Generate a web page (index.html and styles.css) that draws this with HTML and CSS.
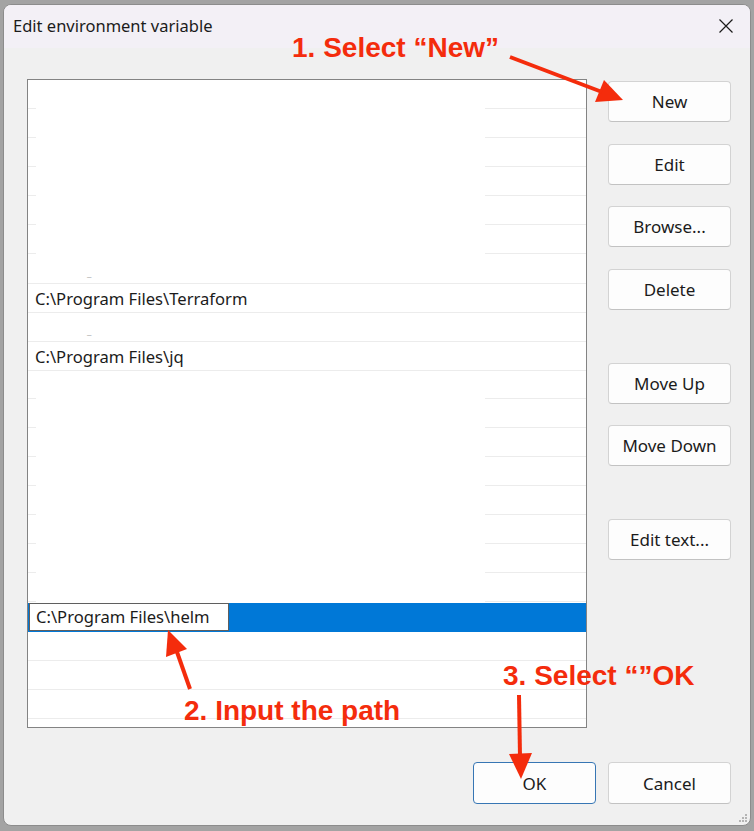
FILE: index.html
```html
<!DOCTYPE html>
<html lang="en">
  <head>
    <meta charset="UTF-8" />
    <title>Edit environment variable</title>
    <link rel="stylesheet" href="styles.css">
  </head>
  <body>
    <div class="dialog">
      <div class="titlebar">
        <span class="title">Edit environment variable</span>
        <svg class="close" width="16" height="16" viewBox="0 0 16 16">
          <path d="M1.5 1.5 L14.5 14.5 M14.5 1.5 L1.5 14.5" stroke="#1b1b1b" stroke-width="1.2" fill="none" />
        </svg>
      </div>

      <div class="content">
        <div class="list">
          <div class="row masked"></div>
          <div class="row masked"></div>
          <div class="row masked"></div>
          <div class="row masked"></div>
          <div class="row masked"></div>
          <div class="row masked"></div>
          <div class="row"><span class="tick">_</span></div>
          <div class="row">C:\Program Files\Terraform</div>
          <div class="row"><span class="tick">_</span></div>
          <div class="row">C:\Program Files\jq</div>
          <div class="row masked"></div>
          <div class="row masked"></div>
          <div class="row masked"></div>
          <div class="row masked"></div>
          <div class="row masked"></div>
          <div class="row masked"></div>
          <div class="row masked"></div>
          <div class="row masked"></div>
          <div class="row selected">
            <span class="edit-box">C:\Program Files\helm</span>
          </div>
          <div class="row"></div>
          <div class="row"></div>
          <div class="row"></div>
        </div>

        <div class="side-buttons">
          <button>New</button>
          <button>Edit</button>
          <button>Browse...</button>
          <button>Delete</button>
          <button class="group">Move Up</button>
          <button>Move Down</button>
          <button class="group">Edit text...</button>
        </div>
      </div>

      <div class="footer">
        <button class="default">OK</button>
        <button>Cancel</button>
      </div>

      <svg class="grip" width="10" height="10" viewBox="0 0 10 10">
        <rect x="7" y="1" width="2" height="2" fill="#b4b4b4" />
        <rect x="4" y="4" width="2" height="2" fill="#b4b4b4" />
        <rect x="7" y="4" width="2" height="2" fill="#b4b4b4" />
        <rect x="1" y="7" width="2" height="2" fill="#b4b4b4" />
        <rect x="4" y="7" width="2" height="2" fill="#b4b4b4" />
        <rect x="7" y="7" width="2" height="2" fill="#b4b4b4" />
      </svg>
    </div>

    <!-- red callouts drawn over the screenshot -->
    <svg class="notes" width="754" height="831" viewBox="0 0 754 831">
      <g fill="#f42c0c" stroke="none">
        <text x="292" y="57">1. Select “New”</text>
        <text x="184" y="720">2. Input the path</text>
        <text x="503" y="685">3. Select “”OK</text>
        <polygon points="623,100 595,102 604,80" />
        <polygon points="168,630 187,649 166,657" />
        <polygon points="521,779 532,753 509,754" />
      </g>
      <g stroke="#f42c0c" stroke-width="4" fill="none">
        <line x1="510" y1="57" x2="602" y2="92" />
        <line x1="190" y1="689" x2="177" y2="652" />
        <line x1="519" y1="695" x2="520" y2="757" />
      </g>
    </svg>
  </body>
</html>
```

FILE: styles.css
```css
* {
  box-sizing: border-box;
}

body {
  margin: 0;
  padding: 4px 3px 5px 3px;
  height: 831px;
  overflow: hidden;
  position: relative;
  background: #a3a3a3;
  font-family: "Noto Sans", "Open Sans", sans-serif;
  color: #1b1b1b;
}

.dialog {
  position: relative;
  height: 822px;
  background: #f0f0f0;
  border: 1px solid #8c8c8c;
  border-radius: 8px;
  overflow: hidden;
}

.titlebar {
  height: 43px;
  display: flex;
  align-items: center;
  justify-content: space-between;
  padding: 0 16px 0 9px;
  background: #f3f0f6;
}

.title {
  font-size: 16.5px;
  margin-top: -2px;
}

.close {
  margin-top: -2px;
}

.content {
  display: flex;
  align-items: flex-start;
  padding: 31px 19px 0 23px;
}

.list {
  width: 560px;
  height: 649px;
  padding-top: 1px;
  background: #fff;
  border: 1px solid #838383;
  overflow: hidden;
}

.row {
  height: 29px;
  padding-left: 7px;
  border-bottom: 1px solid #ececec;
  font-size: 16.6px;
  line-height: 29px;
  white-space: nowrap;
}

.row.masked {
  border-bottom-color: transparent;
  background:
    linear-gradient(#ececec, #ececec) left bottom / 8px 1px no-repeat,
    linear-gradient(#ececec, #ececec) right bottom / 101px 1px no-repeat;
}

.tick {
  color: #b8b8b8;
  font-size: 10px;
  padding-left: 52px;
  line-height: 20px;
}

.row.selected {
  padding: 0 0 0 1px;
  background: #0078d7;
  border-bottom: none;
}

.edit-box {
  display: block;
  width: 200px;
  height: 28px;
  padding-left: 6px;
  background: #fff;
  border: 1px solid #5f5f5f;
  line-height: 26px;
}

.side-buttons {
  display: flex;
  flex-direction: column;
  gap: 21.5px;
  margin: 2px 0 0 21px;
}

button {
  width: 123px;
  height: 41px;
  padding: 0;
  font-family: inherit;
  font-size: 17px;
  color: #1b1b1b;
  background: #fdfdfd;
  border: 1px solid #d3d3d3;
  border-bottom-color: #c2c2c2;
  border-radius: 4px;
}

.side-buttons .group {
  margin-top: 31.5px;
}

.footer {
  display: flex;
  justify-content: flex-end;
  gap: 12px;
  margin-top: 34px;
  padding-right: 19px;
}

.footer button {
  height: 42px;
}

button.default {
  border: 1px solid #3776b4;
}

.grip {
  position: absolute;
  right: 2px;
  bottom: 2px;
}

.notes {
  position: absolute;
  top: 0;
  left: 0;
  pointer-events: none;
}

.notes text {
  font-family: "Liberation Sans", Arial, sans-serif;
  font-weight: bold;
  font-size: 28px;
}
```
